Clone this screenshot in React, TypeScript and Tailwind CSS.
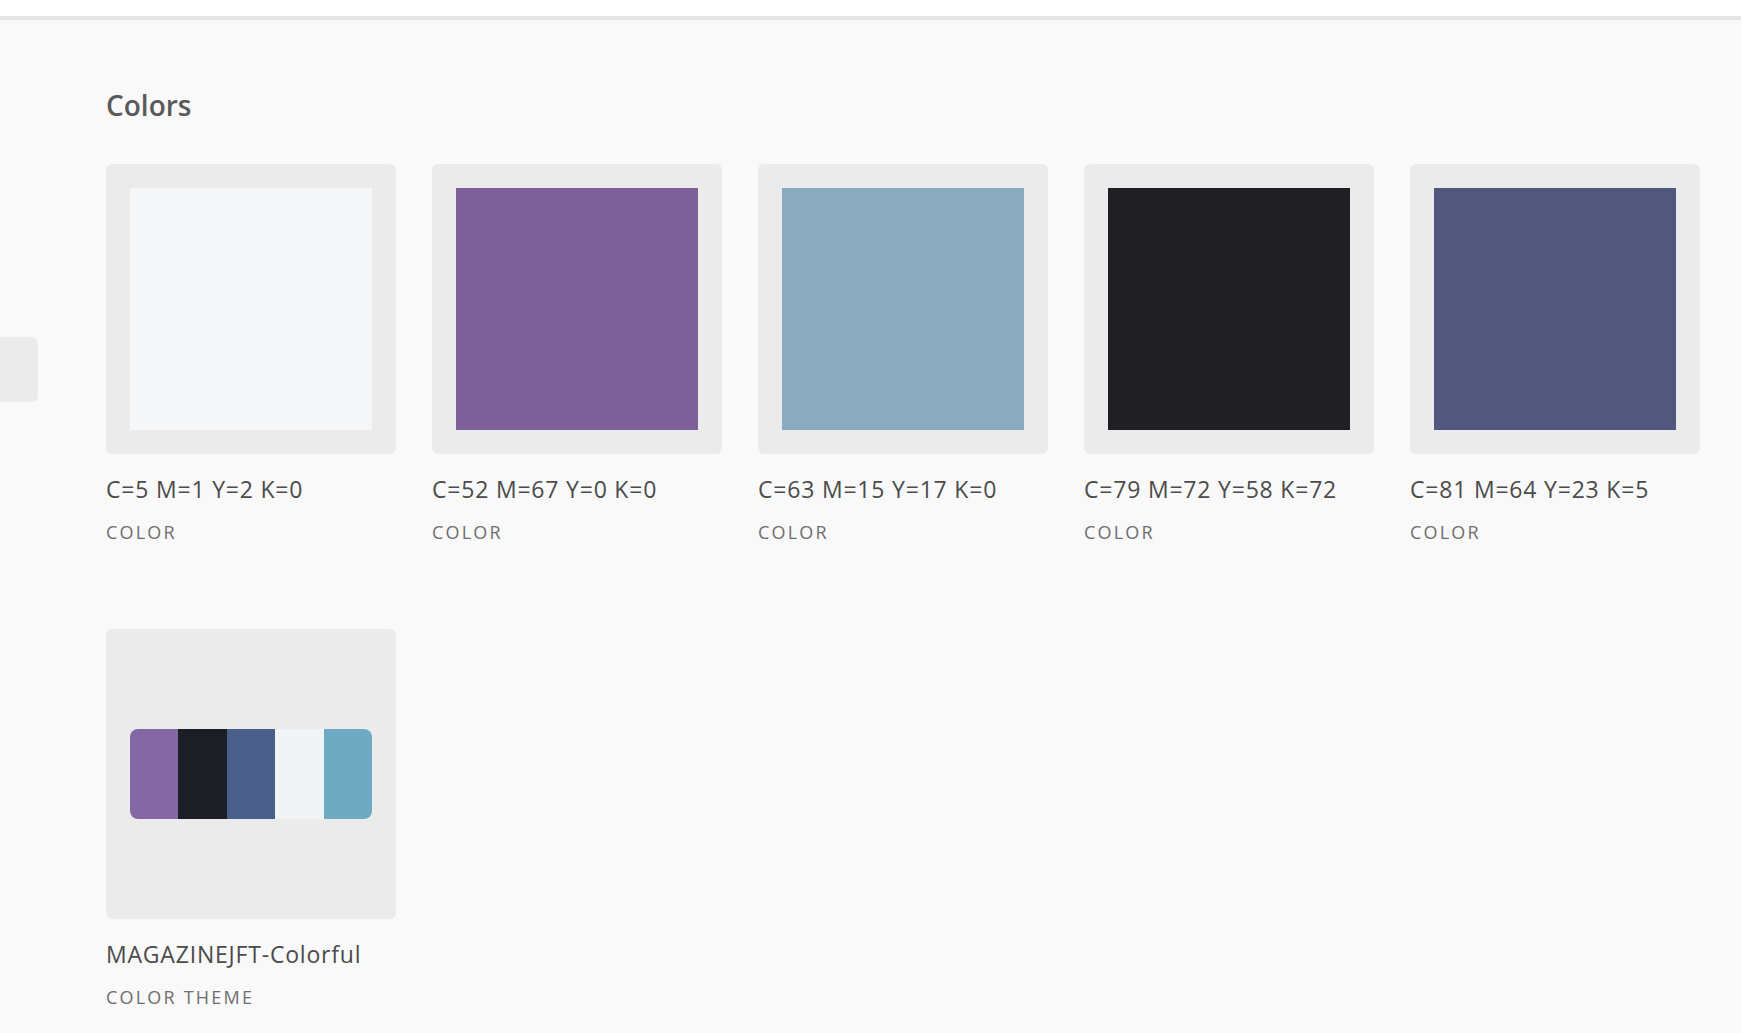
import React from "react"

const swatches = [
  { hex: "#f5f7f9", name: "C=5 M=1 Y=2 K=0" },
  { hex: "#7f6199", name: "C=52 M=67 Y=0 K=0" },
  { hex: "#8aaabf", name: "C=63 M=15 Y=17 K=0" },
  { hex: "#1f1f24", name: "C=79 M=72 Y=58 K=72" },
  { hex: "#52587d", name: "C=81 M=64 Y=23 K=5" },
]

const theme = ["#8468a5", "#1c1e26", "#4a5f89", "#f0f4f6", "#6eaac2"]

function Caption({ title, kind }: { title: string; kind: string }) {
  return (
    <div className="flex flex-col">
      <div className="mt-[24px] text-[23px] leading-[23px] tracking-[0.8px] text-[#4b4b4b] whitespace-nowrap">{title}</div>
      <div className="mt-[22px] text-[18px] leading-[18px] tracking-[2.2px] text-[#6e6e6e] whitespace-nowrap">{kind}</div>
    </div>
  )
}

export default function App() {
  return (
    <div className="min-h-[1033px] w-full bg-white font-['Open_Sans',sans-serif]">
      <div className="h-4 bg-white" />
      <div className="h-1 bg-[#e6e6e6]" />
      <div className="relative min-h-[1013px] bg-[#f9f9f9] pl-[106px] pt-[71px]">
        <div className="absolute left-0 top-[317px] h-[65px] w-[38px] rounded-r-md bg-[#ebebeb]" />
        <h2 className="text-[28px] leading-[28px] font-semibold text-[#5a5a5a]">Colors</h2>
        <div className="mt-[45px] grid grid-cols-[repeat(5,290px)] gap-x-[36px] gap-y-[88px]">
          {swatches.map((s) => (
            <div key={s.name} className="flex flex-col">
              <div className="h-[290px] w-[290px] rounded-md bg-[#ebebeb] p-6">
                <div className="h-full w-full" style={{ backgroundColor: s.hex }} />
              </div>
              <Caption title={s.name} kind="COLOR" />
            </div>
          ))}
          <div className="flex flex-col">
            <div className="flex h-[290px] w-[290px] items-center rounded-md bg-[#ebebeb] px-6">
              <div className="flex h-[90px] w-full overflow-hidden rounded-lg">
                {theme.map((c) => (
                  <div key={c} className="h-full flex-1" style={{ backgroundColor: c }} />
                ))}
              </div>
            </div>
            <Caption title="MAGAZINEJFT-Colorful" kind="COLOR THEME" />
          </div>
        </div>
      </div>
    </div>
  )
}
